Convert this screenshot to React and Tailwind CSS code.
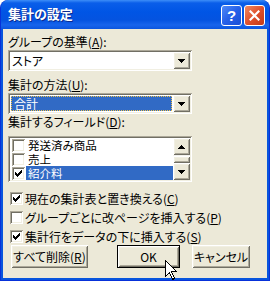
const raised =
  'shadow-[inset_1px_1px_0_#ffffff,inset_-1px_-1px_0_#716f64,inset_2px_2px_0_#f1efe2,inset_-2px_-2px_0_#aca899]';
const sunken =
  'shadow-[inset_1px_1px_0_#aca899,inset_-1px_-1px_0_#ffffff,inset_2px_2px_0_#716f64,inset_-2px_-2px_0_#f1efe2]';

const CHECK = ['......X', '.....XX', 'X...XXX', 'XX.XXX.', 'XXXXX..', '.XXX...', '..X....'];

const CheckMark = () => (
  <svg width="7" height="7" viewBox="0 0 7 7" shapeRendering="crispEdges">
    {CHECK.flatMap((row, y) =>
      row.split('').map((c, x) => (c === 'X' ? <rect key={`${x}-${y}`} x={x} y={y} width="1" height="1" fill="#000" /> : null))
    )}
  </svg>
);

const Box = ({ checked }) => (
  <div className={`w-[13px] h-[13px] shrink-0 bg-white flex items-center justify-center ${sunken}`}>
    {checked && <CheckMark />}
  </div>
);

const Arrow = ({ up }) => (
  <svg width="7" height="4" viewBox="0 0 7 4" shapeRendering="crispEdges">
    <path d={up ? 'M3 0h1v1h1v1h1v1h1v1H0V3h1V2h1V1h1z' : 'M0 0h7v1H6v1H5v1H4v1H3V3H2V2H1V1H0z'} fill="#000" />
  </svg>
);

const Mn = ({ children }) => <span className="underline underline-offset-[1px]">{children}</span>;

const Combo = ({ children }) => (
  <div className={`w-[184px] h-[21px] bg-white p-[2px] flex ${sunken}`}>
    <div className="flex-1 flex items-center">{children}</div>
    <div className={`w-[17px] h-[17px] bg-[#ece9d8] flex items-center justify-center ${raised}`}>
      <Arrow />
    </div>
  </div>
);

const items = [
  { label: '発送済み商品', checked: false },
  { label: '売上', checked: false },
  { label: '紹介料', checked: true, selected: true },
];

const options = [
  { label: <>現在の集計表と置き換える(<Mn>C</Mn>)</>, checked: true },
  { label: <>グループごとに改ページを挿入する(<Mn>P</Mn>)</>, checked: false },
  { label: <>集計行をデータの下に挿入する(<Mn>S</Mn>)</>, checked: true },
];

export default function App() {
  return (
    <div className="relative w-[270px] h-[281px] bg-white overflow-hidden font-['Noto_Sans_CJK_JP',sans-serif] [font-feature-settings:'palt'] text-[12px] text-black">
      <div className="w-full h-full flex flex-col rounded-t-[8px] bg-[#0855dd] border border-[#0831d9] border-t-0">
        {/* Title bar */}
        <div className="h-[29px] shrink-0 flex items-start rounded-t-[8px] bg-[linear-gradient(180deg,#3d8ef8_0px,#0a5ee9_3px,#0055e5_12px,#0453e0_20px,#1864ec_25px,#0b55de_29px)] pl-[7px] pr-[4px]">
          <span className="mt-[6px] text-[13px] leading-[16px] font-bold text-white [text-shadow:1px_1px_0_#0b2a8f]">
            集計の設定
          </span>
          <div className="ml-auto mt-[5px] flex gap-[2px]">
            <div className="w-[21px] h-[21px] rounded-[3px] border border-white bg-[linear-gradient(135deg,#4f8af8,#2660e8_50%,#1a4fd6)] flex items-center justify-center text-white font-bold text-[15px] leading-none font-['Liberation_Sans',sans-serif]">
              ?
            </div>
            <div className="w-[21px] h-[21px] rounded-[3px] border border-white bg-[linear-gradient(135deg,#f08a60,#e0502c_50%,#c23a18)] flex items-center justify-center">
              <svg width="11" height="11" viewBox="0 0 11 11">
                <path d="M1.5 1.5l8 8M9.5 1.5l-8 8" stroke="#fff" strokeWidth="2.2" strokeLinecap="square" />
              </svg>
            </div>
          </div>
        </div>

        {/* Body */}
        <div className="flex-1 mx-[2px] mb-[2px] bg-[#ece9d8] pl-[5px] flex flex-col">
          <div className="mt-[6px] h-[13px] leading-[13px]">グループの基準(<Mn>A</Mn>):</div>
          <div className="mt-[2px]">
            <Combo>
              <span className="pl-[2px] leading-[13px]">ストア</span>
            </Combo>
          </div>

          <div className="mt-[7px] h-[13px] leading-[13px]">集計の方法(<Mn>U</Mn>):</div>
          <div className="mt-[2px]">
            <Combo>
              <div className="ml-[1px] mr-[1px] w-full h-[15px] bg-[#316ac5] border border-dotted border-[#f0c24a] text-white leading-[13px] pl-[2px]">
                合計
              </div>
            </Combo>
          </div>

          <div className="mt-[1px] h-[13px] leading-[13px]">集計するフィールド(<Mn>D</Mn>):</div>
          <div className={`mt-[8px] w-[184px] h-[46px] bg-white p-[2px] flex ${sunken}`}>
            <div className="flex-1 flex flex-col">
              {items.map((it) => (
                <div key={it.label} className="h-[14px] flex items-center pl-[2px] overflow-hidden">
                  <Box checked={it.checked} />
                  <div
                    className={`ml-[1px] flex-1 h-[14px] text-[11.5px] leading-[14px] pl-[2px] ${it.selected ? 'bg-[#316ac5] text-white' : ''}`}
                  >
                    {it.label}
                  </div>
                </div>
              ))}
            </div>
            <div className="w-[17px] flex flex-col bg-[#f4f3ee]">
              <div className={`h-[17px] bg-[#ece9d8] flex items-center justify-center ${raised}`}>
                <Arrow up />
              </div>
              <div className="h-[1px]" />
              <div className={`h-[7px] bg-[#ece9d8] ${raised}`} />
              <div className={`h-[17px] bg-[#ece9d8] flex items-center justify-center ${raised}`}>
                <Arrow />
              </div>
            </div>
          </div>

          <div className="mt-[10px] flex flex-col gap-[6px]">
            {options.map((o, i) => (
              <div key={i} className="h-[13px] flex items-center pl-[2px]">
                <Box checked={o.checked} />
                <span className="ml-[2px] leading-[13px]">{o.label}</span>
              </div>
            ))}
          </div>

          <div className="mt-[2px] flex items-start">
            <div className={`ml-[3px] w-[77px] h-[23px] bg-[#ece9d8] flex items-center justify-center ${raised}`}>
              すべて削除(<Mn>R</Mn>)
            </div>
            <div className="ml-[29px] w-[63px] h-[23px] border border-black">
              <div className={`w-full h-full bg-[#ece9d8] flex items-center justify-center ${raised}`}>OK</div>
            </div>
            <div className={`ml-[12px] w-[58px] h-[23px] bg-[#ece9d8] flex items-center justify-center ${raised}`}>
              キャンセル
            </div>
          </div>
        </div>
      </div>

      {/* mouse pointer */}
      <svg className="absolute left-[165px] top-[260px]" width="13" height="21" viewBox="0 0 13 21" shapeRendering="crispEdges">
        <path d="M0.5 0.5V16.5L4.5 12.5L7.5 19.5L9.5 18.5L6.5 11.5H11.5Z" fill="#fff" stroke="#000" strokeWidth="1" />
      </svg>
    </div>
  );
}
